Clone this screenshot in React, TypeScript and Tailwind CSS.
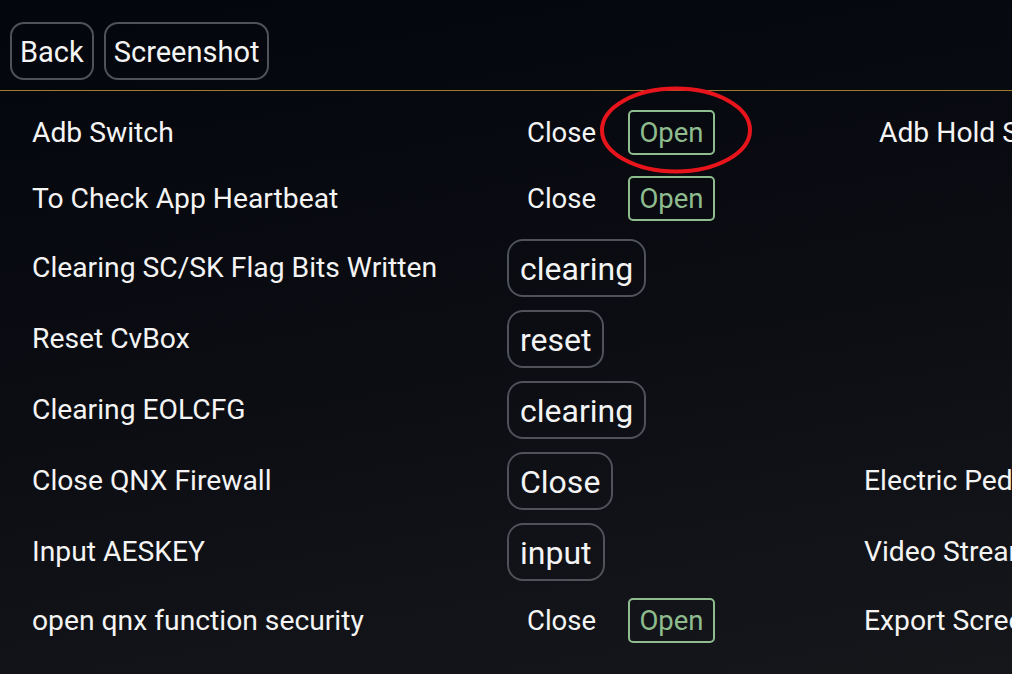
import type { ReactNode } from 'react';

type Row = {
  label: string;
  kind: 'toggle' | 'button';
  action?: string;
  right?: string;
  rightInset?: boolean;
  h: string;
};

const rows: Row[] = [
  { label: 'Adb Switch', kind: 'toggle', right: 'Adb Hold Switch', rightInset: true, h: 'h-[66px]' },
  { label: 'To Check App Heartbeat', kind: 'toggle', h: 'h-[67px]' },
  { label: 'Clearing SC/SK Flag Bits Written', kind: 'button', action: 'clearing', h: 'h-[71px]' },
  { label: 'Reset CvBox', kind: 'button', action: 'reset', h: 'h-[71px]' },
  { label: 'Clearing EOLCFG', kind: 'button', action: 'clearing', h: 'h-[71px]' },
  { label: 'Close QNX Firewall', kind: 'button', action: 'Close', right: 'Electric Pedal Switch', h: 'h-[71px]' },
  { label: 'Input AESKEY', kind: 'button', action: 'input', right: 'Video Stream Switch', h: 'h-[71px]' },
  { label: 'open qnx function security', kind: 'toggle', right: 'Export Screen Log', h: 'h-[66px]' },
];

function OutlineButton({ children, big }: { children: ReactNode; big?: boolean }) {
  return (
    <button
      type="button"
      className={
        big
          ? 'h-[58px] px-[11px] pt-[2px] rounded-[16px] border-2 border-[#4f5258] text-[32px] leading-none text-[#f4f4f4]'
          : 'h-[58px] px-[8px] pt-[3px] rounded-[14px] border-2 border-[#4f5258] text-[29px] leading-none text-[#f4f4f4]'
      }
    >
      {children}
    </button>
  );
}

export default function App() {
  return (
    <div
      className="relative w-[1012px] h-[674px] overflow-hidden text-[#f4f4f4] bg-[linear-gradient(170deg,#04060d_0%,#0a0c12_45%,#16171b_100%)]"
      style={{ fontFamily: 'Roboto, "Noto Sans", sans-serif' }}
    >
      <div className="h-[90px] pl-[10px] pt-[22px] flex items-start gap-[10px]">
        <OutlineButton>Back</OutlineButton>
        <OutlineButton>Screenshot</OutlineButton>
      </div>
      <div className="h-px bg-[#9c7c2c]" />

      <div className="pt-[8px]">
        {rows.map((row, i) => (
          <div key={i} className={`grid grid-cols-[507px_357px_1fr] items-center ${row.h}`}>
            <div className="pl-[32px] pt-[2px] text-[28.25px] leading-none whitespace-nowrap">{row.label}</div>
            <div className="flex items-center">
              {row.kind === 'toggle' ? (
                <>
                  <span className="pl-[20px] w-[121px] pt-[1px] text-[27.5px] leading-none">Close</span>
                  <span className="h-[45px] w-[87px] pt-[1px] flex items-center justify-center rounded-[5px] border-2 border-[#8fbc8f] text-[27.5px] leading-none text-[#8fbc8f]">
                    Open
                  </span>
                </>
              ) : (
                <OutlineButton big>{row.action}</OutlineButton>
              )}
            </div>
            <div className={`pt-[2px] text-[28.25px] leading-none whitespace-nowrap ${row.rightInset ? 'pl-[15px]' : ''}`}>
              {row.right ?? ''}
            </div>
          </div>
        ))}
      </div>

      <svg
        className="absolute left-[596px] top-[84px] pointer-events-none"
        width="160"
        height="92"
        viewBox="0 0 160 92"
      >
        <ellipse cx="80" cy="46" rx="74" ry="41.5" fill="none" stroke="#e8141c" strokeWidth="4" />
      </svg>
    </div>
  );
}
